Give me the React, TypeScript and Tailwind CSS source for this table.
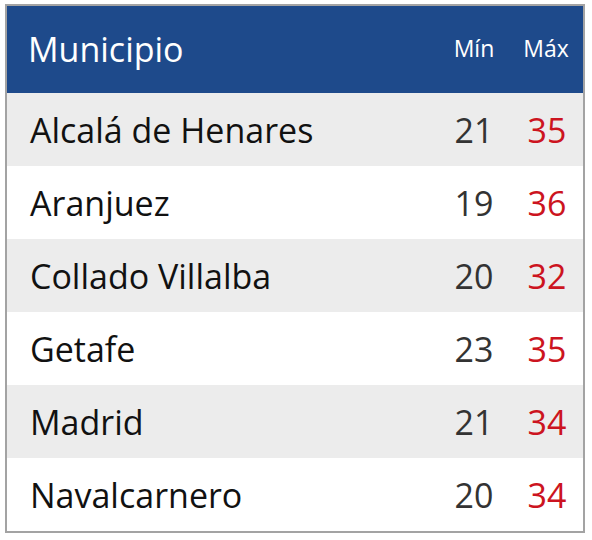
import React from "react";

const rows: [string, number, number][] = [
  ["Alcalá de Henares", 21, 35],
  ["Aranjuez", 19, 36],
  ["Collado Villalba", 20, 32],
  ["Getafe", 23, 35],
  ["Madrid", 21, 34],
  ["Navalcarnero", 20, 34],
];

export default function App() {
  return (
    <div className="w-[592px] h-[540px] bg-white pt-[4px] pl-[5px]" style={{ fontFamily: '"Open Sans", "Noto Sans", sans-serif' }}>
      <div className="w-[580px] border-2 border-[#a3a3a3] bg-white">
        <div className="grid grid-cols-[1fr_74px_72px] h-[87px] bg-[#1e4a8b] text-white items-center">
          <div className="pl-[21px] text-[34px] leading-none pb-[2px]">Municipio</div>
          <div className="text-center text-[23px] leading-none pb-[2px]">Mín</div>
          <div className="text-center text-[23px] leading-none pb-[2px] pr-[2px]">Máx</div>
        </div>
        {rows.map(([name, min, max], i) => (
          <div
            key={name}
            className={`grid grid-cols-[1fr_74px_72px] h-[73px] items-center ${i % 2 === 0 ? "bg-[#ececec]" : "bg-white"}`}
          >
            <div className="pl-[23px] text-[34px] leading-none text-[#111111]">{name}</div>
            <div className="text-center text-[34px] leading-none text-[#333333]">{min}</div>
            <div className="text-center text-[34px] leading-none text-[#cc1420]">{max}</div>
          </div>
        ))}
      </div>
    </div>
  );
}
